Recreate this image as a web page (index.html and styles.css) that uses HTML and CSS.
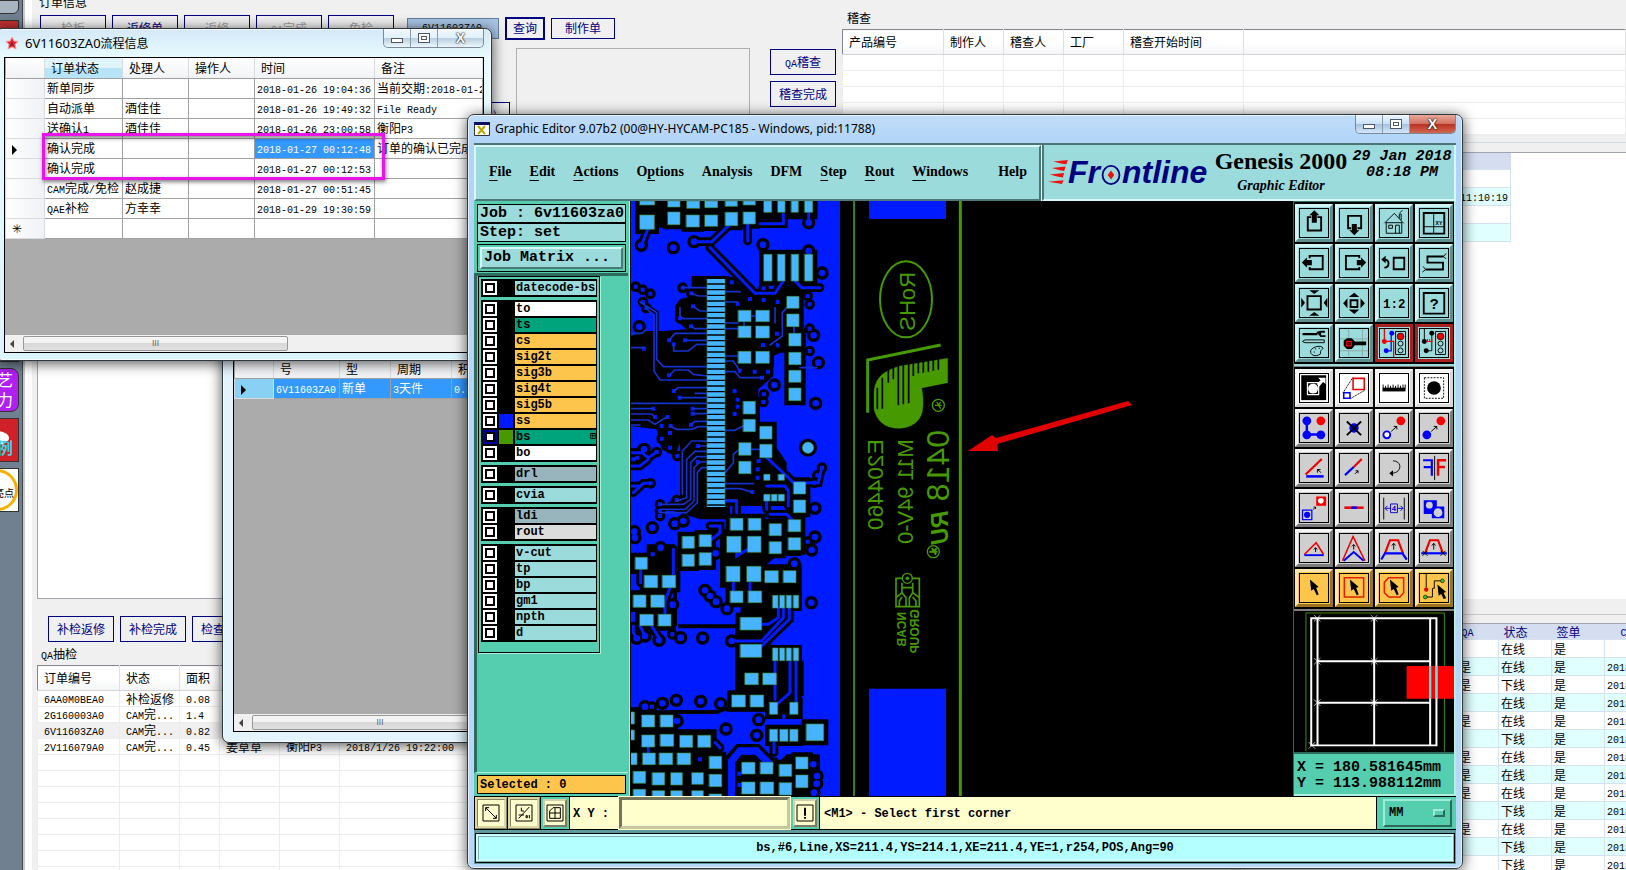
FILE: index.html
```html
<!DOCTYPE html>
<html lang="zh-CN">
<head>
  <meta charset="UTF-8" />
  <meta name="viewport" content="width=device-width, initial-scale=1.0" />
  <title>Graphic Editor 9.07b2</title>
  <link rel="stylesheet" href="styles.css">
</head>
<body>
  <!-- order management app, behind everything -->
  <div class="app">
    <nav class="sidebar">
      <a href="#" class="side-icon side-top"></a>
      <a href="#" class="side-icon side-second"></a>
      <a href="#" class="side-icon side-purple">艺<br>力</a>
      <a href="#" class="side-icon side-red"><span class="blob"></span>例</a>
      <a href="#" class="side-icon side-yellow"><span class="ring">亮点</span></a>
    </nav>
    <main class="app-main">
      <section class="top">
        <div class="orders">
          <div class="group-title">订单信息</div>
          <div class="order-bar">
            <button class="btn off">检板</button>
            <button class="btn">返修单</button>
            <button class="btn off">返修</button>
            <button class="btn off"><span class="l">QA</span>完成</button>
            <button class="btn off">免检</button>
            <input class="order-no" type="text" value="6V11603ZA0" aria-label="订单编号">
            <button class="btn btn-query">查询</button>
            <button class="btn btn-make">制作单</button>
          </div>
          <div class="order-body">
            <button class="btn btn-small">)</button>
            <div class="order-box"></div>
          </div>
        </div>
        <div class="audit-buttons">
          <button class="btn"><span class="l">QA</span>稽查</button>
          <button class="btn">稽查完成</button>
        </div>
        <div class="audit">
          <div class="group-title">稽查</div>
          <table class="list audit-list">
            <colgroup><col class="w101"><col class="w60"><col class="w60"><col class="w60"><col class="w120"><col></colgroup>
            <thead><tr><th>产品编号</th><th>制作人</th><th>稽查人</th><th>工厂</th><th>稽查开始时间</th><th></th></tr></thead>
            <tbody>
              <tr><td></td><td></td><td></td><td></td><td></td><td></td></tr>
              <tr><td></td><td></td><td></td><td></td><td></td><td></td></tr>
              <tr><td></td><td></td><td></td><td></td><td></td><td></td></tr>
              <tr><td></td><td></td><td></td><td></td><td></td><td></td></tr>
              <tr><td></td><td></td><td></td><td></td><td></td><td></td></tr>
            </tbody>
          </table>
        </div>
      </section>

      <section class="middle">
        <div class="white-list"></div>
        <div class="times">
          <table class="grid times-grid">
            <thead><tr><th></th></tr></thead>
            <tbody>
              <tr><td></td></tr>
              <tr><td><span class="l">2018/1/29 11:10:19</span></td></tr>
              <tr><td></td></tr>
              <tr><td></td></tr>
            </tbody>
          </table>
        </div>
      </section>

      <section class="bottom">
        <div class="bottom-left">
          <div class="check-bar">
            <button class="btn">补检返修</button>
            <button class="btn">补检完成</button>
            <button class="btn">检查完成</button>
          </div>
          <div class="group-title qa-title"><span class="l">QA</span>抽检</div>
          <table class="list qa-list">
            <colgroup><col class="w82"><col class="w60"><col class="w40"><col class="w60"><col class="w60"><col></colgroup>
            <thead><tr><th>订单编号</th><th>状态</th><th>面积</th><th>处理人</th><th>工厂</th><th>时间</th></tr></thead>
            <tbody>
              <tr><td><span class="l">6AA0M0BEA0</span></td><td>补检返修</td><td><span class="l">0.08</span></td><td></td><td></td><td></td></tr>
              <tr><td><span class="l">2G160003A0</span></td><td><span class="l">CAM</span>完<span class="l">...</span></td><td><span class="l">1.4</span></td><td></td><td></td><td></td></tr>
              <tr class="sel"><td><span class="l">6V11603ZA0</span></td><td><span class="l">CAM</span>完<span class="l">...</span></td><td><span class="l">0.82</span></td><td></td><td></td><td></td></tr>
              <tr><td><span class="l">2V116079A0</span></td><td><span class="l">CAM</span>完<span class="l">...</span></td><td><span class="l">0.45</span></td><td>姜草草</td><td>衡阳<span class="l">P3</span></td><td><span class="l">2018/1/26 19:22:00</span></td></tr>
              <tr><td></td><td></td><td></td><td></td><td></td><td></td></tr>
              <tr><td></td><td></td><td></td><td></td><td></td><td></td></tr>
              <tr><td></td><td></td><td></td><td></td><td></td><td></td></tr>
              <tr><td></td><td></td><td></td><td></td><td></td><td></td></tr>
              <tr><td></td><td></td><td></td><td></td><td></td><td></td></tr>
              <tr><td></td><td></td><td></td><td></td><td></td><td></td></tr>
              <tr><td></td><td></td><td></td><td></td><td></td><td></td></tr>
              <tr><td></td><td></td><td></td><td></td><td></td><td></td></tr>
            </tbody>
          </table>
        </div>
        <div class="bottom-right">
          <table class="grid status-grid">
            <colgroup><col class="w216"><col class="w42"><col class="w53"><col class="w53"><col class="w120"></colgroup>
            <thead><tr><th></th><th><span class="l">QA</span></th><th>状态</th><th>签单</th><th class="far"><span class="l">CAM</span></th></tr></thead>
            <tbody>
              <tr><td></td><td></td><td>在线</td><td>是</td><td></td></tr>
              <tr><td></td><td>是</td><td>在线</td><td>是</td><td><span class="l">2018/1/29</span></td></tr>
              <tr><td></td><td>是</td><td>下线</td><td>是</td><td><span class="l">2018/1/29</span></td></tr>
              <tr><td></td><td></td><td>在线</td><td>是</td><td><span class="l">2018/1/29</span></td></tr>
              <tr><td></td><td>是</td><td>在线</td><td>是</td><td><span class="l">2018/1/29</span></td></tr>
              <tr><td></td><td></td><td>下线</td><td>是</td><td><span class="l">2018/1/29</span></td></tr>
              <tr><td></td><td>是</td><td>在线</td><td>是</td><td><span class="l">2018/1/29</span></td></tr>
              <tr><td></td><td>是</td><td>在线</td><td>是</td><td><span class="l">2018/1/29</span></td></tr>
              <tr><td></td><td>是</td><td>在线</td><td>是</td><td><span class="l">2018/1/29</span></td></tr>
              <tr><td></td><td></td><td>下线</td><td>是</td><td><span class="l">2018/1/29</span></td></tr>
              <tr><td></td><td>是</td><td>在线</td><td>是</td><td><span class="l">2018/1/29</span></td></tr>
              <tr><td></td><td></td><td>下线</td><td>是</td><td><span class="l">2018/1/29</span></td></tr>
              <tr><td></td><td></td><td>下线</td><td>是</td><td><span class="l">2018/1/29</span></td></tr>
            </tbody>
          </table>
        </div>
      </section>
    </main>
  </div>

  <!-- order query window -->
  <div class="window query-win">
    <div class="query-body">
      <table class="dgv query-table">
        <colgroup><col class="w39"><col class="w66"><col class="w51"><col class="w61"><col></colgroup>
        <thead><tr><th></th><th>生产编<br>号</th><th>类<br>型</th><th>交货<br>周期</th><th>面<br>积</th></tr></thead>
        <tbody><tr><td class="row-head"><span class="tri"></span></td><td><span class="l">6V11603ZA0</span></td><td>新单</td><td><span class="l">3</span>天件</td><td><span class="l">0.82</span></td></tr></tbody>
      </table>
      <div class="scroll"><span class="arrow-left"></span><span class="thumb">III</span></div>
    </div>
  </div>

  <!-- flow info window -->
  <div class="window flow-win">
    <div class="titlebar">
      <svg class="star" viewBox="0 0 14 14"><path fill="#e02838" stroke="#f8a0a0" d="M7 1l2 4 4 .4-3 3 1 4.600L7 11l-4 2 1-4.600-3-3L5 5z"/><path stroke="#801020" d="M5 9h4M7 6v3"/></svg>
      <span class="title"><b>6V11603ZA0</b>流程信息</span>
      <div class="caption">
        <button class="cap" aria-label="min"><i class="min"></i></button>
        <button class="cap" aria-label="max"><i class="max"></i></button>
        <button class="cap cap-close" aria-label="close">X</button>
      </div>
    </div>
    <div class="flow-body">
      <table class="dgv flow-table">
        <colgroup><col class="w39"><col class="w78"><col class="w66"><col class="w66"><col class="w120"><col></colgroup>
        <thead><tr><th></th><th class="hot">订单状态</th><th>处理人</th><th>操作人</th><th>时间</th><th>备注</th></tr></thead>
        <tbody>
          <tr><td class="row-head"></td><td>新单同步</td><td></td><td></td><td><span class="l">2018-01-26 19:04:36</span></td><td>当前交期<span class="l">:2018-01-29</span></td></tr>
          <tr><td class="row-head"></td><td>自动派单</td><td>酒佳佳</td><td></td><td><span class="l">2018-01-26 19:49:32</span></td><td><span class="l">File Ready</span></td></tr>
          <tr><td class="row-head"></td><td>送确认<span class="l">1</span></td><td>酒佳佳</td><td></td><td><span class="l">2018-01-26 23:00:58</span></td><td>衡阳<span class="l">P3</span></td></tr>
          <tr><td class="row-head"><span class="tri"></span></td><td>确认完成</td><td></td><td></td><td class="picked"><span class="l">2018-01-27 00:12:48</span></td><td>订单的确认已完成</td></tr>
          <tr><td class="row-head"></td><td>确认完成</td><td></td><td></td><td><span class="l">2018-01-27 00:12:53</span></td><td></td></tr>
          <tr><td class="row-head"></td><td><span class="l">CAM</span>完成<span class="l">/</span>免检</td><td>赵成捷</td><td></td><td><span class="l">2018-01-27 00:51:45</span></td><td></td></tr>
          <tr><td class="row-head"></td><td><span class="l">QAE</span>补检</td><td>方幸幸</td><td></td><td><span class="l">2018-01-29 19:30:59</span></td><td></td></tr>
          <tr><td class="row-head">✳</td><td></td><td></td><td></td><td></td><td></td></tr>
        </tbody>
      </table>
      <div class="scroll"><span class="arrow-left"></span><span class="thumb thumb-flow">III</span></div>
      <div class="highlight"></div>
    </div>
  </div>

  <!-- Genesis editor -->
  <div class="window editor">
    <div class="titlebar">
      <svg class="xicon" viewBox="0 0 16 14"><path fill="#fff" stroke="#333" d="M.5.5h15v13H.5z"/><path fill="#101060" d="M0 0h16v3H0z"/><path stroke="#b8a800" stroke-width="2" d="M4 4l7 8M11 4l-7 8"/></svg>
      <span class="title">Graphic Editor 9.07b2 (00@HY-HYCAM-PC185 - Windows, pid:11788)</span>
      <div class="caption">
        <button class="cap" aria-label="min"><i class="min"></i></button>
        <button class="cap" aria-label="max"><i class="max"></i></button>
        <button class="cap cap-close cap-red" aria-label="close">X</button>
      </div>
    </div>

    <header class="head">
      <nav class="menu">
        <a href="#"><u>F</u>ile</a><a href="#"><u>E</u>dit</a><a href="#"><u>A</u>ctions</a><a href="#">O<u>p</u>tions</a><a href="#">Analysis</a><a href="#">DFM</a><a href="#"><u>S</u>tep</a><a href="#"><u>R</u>out</a><a href="#"><u>W</u>indows</a><a href="#" class="help">Help</a>
      </nav>
      <div class="brand">
        <div class="logo">
          <svg class="flames" viewBox="0 0 54 66"><path fill="#f01010" d="M14 4l40-4-4 12-12-2zM10 22l38-4-4 12-12-2zM4 40l40-4-4 12-12-2zM0 60l42-4-4 10-12-2z"/></svg><span>Fr</span><svg class="o" viewBox="0 0 56 60"><ellipse cx="28" cy="30" rx="23" ry="25" fill="#9cdbdb" stroke="#000080" stroke-width="5"/><path fill="#f01010" d="M28 18l9 12-9 12-9-12z"/></svg><span>ntline</span>
        </div>
        <div class="product"><strong>Genesis 2000</strong><em>Graphic Editor</em></div>
        <div class="clock">29 Jan 2018<br>08:18 PM</div>
      </div>
    </header>

    <div class="work">
      <aside class="layers">
        <div class="field">Job : 6v11603za0</div>
        <div class="field">Step: set</div>
        <div class="matrix-wrap"><button class="matrix">Job Matrix ...</button></div>
        <div class="layer-area">
          <div class="layer-frame">
            <div class="layer-group">
              <label class="layer aqua"><input type="checkbox"><i></i><span>datecode-bs</span></label>
            </div>
            <div class="layer-group">
              <label class="layer white"><input type="checkbox"><i></i><span>to</span></label>
              <label class="layer green"><input type="checkbox"><i></i><span>ts</span></label>
              <label class="layer gold"><input type="checkbox"><i></i><span>cs</span></label>
              <label class="layer gold"><input type="checkbox"><i></i><span>sig2t</span></label>
              <label class="layer gold"><input type="checkbox"><i></i><span>sig3b</span></label>
              <label class="layer gold"><input type="checkbox"><i></i><span>sig4t</span></label>
              <label class="layer gold"><input type="checkbox"><i></i><span>sig5b</span></label>
              <label class="layer gold"><input type="checkbox"><i class="c-blue"></i><span>ss</span></label>
              <label class="layer green work-layer"><input type="checkbox"><i class="c-green"></i><span>bs<small>⊞</small></span></label>
              <label class="layer white"><input type="checkbox"><i></i><span>bo</span></label>
            </div>
            <div class="layer-group">
              <label class="layer slate"><input type="checkbox"><i></i><span>drl</span></label>
            </div>
            <div class="layer-group">
              <label class="layer aqua"><input type="checkbox"><i></i><span>cvia</span></label>
            </div>
            <div class="layer-group">
              <label class="layer slate"><input type="checkbox"><i></i><span>ldi</span></label>
              <label class="layer grey"><input type="checkbox"><i></i><span>rout</span></label>
            </div>
            <div class="layer-group">
              <label class="layer aqua"><input type="checkbox"><i></i><span>v-cut</span></label>
              <label class="layer aqua"><input type="checkbox"><i></i><span>tp</span></label>
              <label class="layer aqua"><input type="checkbox"><i></i><span>bp</span></label>
              <label class="layer aqua"><input type="checkbox"><i></i><span>gm1</span></label>
              <label class="layer aqua"><input type="checkbox"><i></i><span>npth</span></label>
              <label class="layer aqua"><input type="checkbox"><i></i><span>d</span></label>
            </div>
          </div>
        </div>
        <div class="field selected">Selected : 0</div>
      </aside>

      <div class="canvas">
        <!-- board drawing, three units per screen pixel -->
        <svg class="pcb" viewBox="33 15 1986 1791" preserveAspectRatio="xMinYMin slice">
          <defs>
            <path id="pads" d="M60 15h44v12h-44zM144 15h36v18h-36zM201 15h38v22h-38zM255 15h38v20h-38zM316 15h36v16h-36zM370 15h36v12h-36zM432 15h23v34h-23zM474 15h21v34h-21zM514 15h21v34h-21zM554 15h24v34h-24z
            M60 57h43v43h-43zM144 48h36v38h-36zM199 57h39v36h-39zM255 57h38v34h-38zM316 49h37v40h-37zM370 48h36v36h-36zM432 175h24v80h-24zM473 175h22v80h-22zM514 175h22v80h-22zM554 175h24v80h-24z
            M501 301h36v36h-36zM501 354h36v38h-36zM507 412h36v38h-36zM507 469h36v37h-36zM507 523h36v36h-36zM507 576h36v38h-36z
            M355 343h38v34h-38zM408 343h40v34h-40zM355 390h38v35h-38zM408 390h40v36h-40zM355 466h38v36h-38zM408 466h40v36h-40z
            M370 616h36v38h-36zM370 670h36v37h-36zM420 691h36v38h-36zM420 745h36v40h-36zM357 740h36v38h-36zM357 796h36v37h-36zM521 858h36v36h-36zM521 912h36v38h-36z
            M331 967h38v36h-38zM385 967h38v36h-38zM321 1021h42v48h-42zM383 1021h40v48h-40zM448 983h36v36h-36zM505 971h37v36h-37zM448 1037h36v36h-36zM505 1025h37v37h-37z
            M187 1021h36v36h-36zM238 1016h36v36h-36zM187 1075h36v36h-36zM238 1070h36v38h-36zM46 1084h36v36h-36zM73 1138h40v37h-40zM127 1138h40v37h-40zM40 1197h38v37h-38zM93 1197h40v37h-40zM60 1255h40v34h-40zM115 1255h38v35h-38z
            M319 1111h41v46h-41zM381 1111h42v46h-42zM435 1124h40v36h-40zM490 1124h38v36h-38zM331 1185h38v35h-38zM385 1185h40v35h-40zM361 1264h64v38h-64zM361 1345h64v39h-64zM375 1431h40v35h-40zM429 1431h40v35h-40zM336 1497h40v36h-40zM391 1497h40v36h-40z
            M449 1519h24v36h-24zM510 1519h24v36h-24zM449 1600h24v36h-24zM480 1600h24v36h-24zM510 1600h24v36h-24zM559 1584h52v50h-52z
            M66 1557h38v36h-38zM121 1557h38v36h-38zM66 1617h38v36h-38zM121 1615h40v36h-40zM180 1618h38v36h-38zM234 1618h38v36h-38zM33 1671h18v35h-18zM68 1671h38v35h-38zM118 1671h40v35h-40zM172 1671h40v35h-40zM268 1681h37v37h-37z
            M40 1726h37v36h-37zM97 1730h37v37h-37zM153 1730h34v37h-34zM216 1730h34v35h-34zM268 1735h37v37h-37zM40 1780h37v26h-37zM97 1784h37v22h-37zM153 1784h34v22h-34zM216 1784h34v22h-34zM268 1794h37v12h-37z
            M366 1699h39v35h-39zM421 1699h38v35h-38zM478 1705h37v36h-37zM528 1683h36v36h-36zM366 1758h39v36h-39zM421 1758h40v36h-40zM478 1760h37v37h-37zM528 1737h36v38h-36zM33 1548h10v36h-10zM33 1602h10v30h-10z"/>
            <path id="fine" d="M432 835h18v18h-18zM475 835h18v18h-18zM432 895h18v20h-18zM454 895h17v20h-17zM475 895h18v20h-18zM458 1198h16v38h-16zM479 1198h15v38h-15zM499 1198h15v38h-15zM520 1198h16v38h-16zM458 1356h16v38h-16zM479 1356h15v38h-15zM499 1356h15v38h-15zM520 1356h16v38h-16z"/>
            <path id="vias" d="M64 148h0M160 155h0M222 137h0M429 146h0M566 80h0M606 231h0M566 165h0M587 622h0M463 567h0M72 760h0M58 392h0M595 500h0M581 418h0M97 995h0M164 983h0M190 975h0M43 1007h0M45 1025h0M122 1055h0M287 1072h0M585 1023h0M575 1062h0M585 937h0M523 1103h0M574 1220h0M158 1226h0M255 1183h0M270 1200h0M288 1217h0M321 1238h0M182 1325h0M248 1326h0M117 1333h0M75 1320h0M50 1327h0M335 1335h0M169 1513h0M242 1516h0M302 1523h0M75 1532h0M127 1522h0M318 1599h0M416 1571h0M410 1618h0M171 1575h0M591 1740h0M590 1763h0M582 1790h0M580 1705h0"/>
            <path id="dots" d="M47 272h0M68 281h0M91 293h0M69 318h0M79 336h0M188 275h0M214 292h0M219 331h0M180 367h0M213 391h0M147 433h0M161 445h0M195 433h0M335 259h0M431 277h0M390 309h0M431 312h0M473 318h0M353 324h0M563 300h0M569 325h0M569 398h0M569 465h0M471 413h0M473 448h0M429 447h0M426 545h0M444 527h0M404 527h0M359 524h0M147 538h0M162 585h0M179 605h0M100 638h0M105 663h0M143 663h0M218 638h0M218 653h0M213 686h0M125 690h0M152 690h0M150 711h0M125 728h0M150 755h0M172 780h0M344 585h0M353 611h0M353 632h0M344 654h0M432 595h0M430 618h0M234 750h0M234 798h0M416 795h0M413 820h0M413 845h0M397 888h0M606 815h0M592 838h0M583 860h0M72 458h0M40 790h0M110 768h0M52 785h0M92 862h0M170 912h0M120 925h0M98 1075h0M563 1037h0M96 1532h0M157 1315h0M120 945h0M120 960h0M240 1690h0M358 1733h0M358 1767h0"/>
            <path id="wide" d="M222 137H275L330 85M270 155L405 292H465L490 255M420 83H490V55M566 50V80M525 255L545 275H600M383 80V135M85 95L64 148M33 770H65L85 785 110 768M33 810H60L85 790M40 890L70 862H90M33 870H55M440 785L500 840 520 860H595L605 815M440 870H495L505 885V930M350 950V915H320M440 940V900M450 955H500L520 975M270 990H300V1010L275 1030M62 1120V1160M150 1175L135 1215V1255M95 1290L120 1330M60 1290L75 1320M40 1290V1310L50 1327M160 1060V1140M350 1060V1080L400 1050M340 1160V1185M390 1160V1185M490 1235V1265L425 1335H335M475 1235V1265L445 1285H425M508 1235V1270L425 1350M465 1395V1510M510 1395V1490L465 1530M528 1395V1520M85 1655V1680M300 1655L285 1640M462 1640V1670"/>
          </defs>
          <path fill="#001bff" d="M33 15h627v1791H33z"/>
          <path d="M48 15H592V70H405L400 95H110L48 60zM425 165H590V265H425z
          M215 240H325L400 295H470V270H530L545 300V620H497V470H480L460 480V540L415 580V600L410 640H420V690H460V740L500 800V835L520 850V930H180V740L165 780 125 760 110 700 33 690V420L75 405H130L200 400 165 370V330L180 310 215 300z
          M100 945L180 900H330V970H240L160 945zM80 1045H165V1140H80zM300 1000H545V1080H470L440 1105H545V1175H300zM375 1160H545V1245H510L450 1350H545V1555H440V1540H345V1295H360V1255z
          M60 1545H165V1600H290V1635L310 1675V1806H33V1600H60zM345 1675H440L460 1715 500 1675H600V1806H345z"/>
          <path class="cut" d="M65 320L110 350V520L125 545M175 1291H350M150 1548H290L310 1540H440M322 1806V1685L352 1650H415L465 1700M165 1140V1290M545 1395V1500"/>
          <g class="halo">
            <use href="#pads" stroke-width="28"/><use href="#fine" stroke-width="18"/>
            <use href="#vias" stroke-width="40"/><use href="#dots" stroke-width="32"/><use href="#wide" stroke-width="26"/>
          </g>
          <g class="copper">
            <use href="#vias" stroke-width="20"/><use href="#wide" stroke-width="9"/><use href="#dots" class="sq" stroke-width="12"/>
            <path stroke-width="22" d="M335 1806V1695L360 1665H410L450 1705"/>
            <path class="thin" d="M188 275H261M214 292L235 300H261M219 331L240 345H261M180 335V360L190 368H261M213 391L225 398H261M147 433L165 412H261M195 433H261M161 445V465H205L230 445H261M60 318L110 350V490L130 512H261M79 336L102 360V525L120 552H261M147 538L165 522H205L220 535 261 540M33 622H261M162 585L175 575H261M179 605H261M225 592H261M33 638H100M33 654H95L105 663M33 672H85L105 685 125 672 143 663M33 687H60M218 638H261M218 653H261M213 686L225 676H261M150 690L170 700H215L235 692H261M33 455H72M33 412H65L80 400M261 735H215L187 765V895M261 750H234M261 766H225L200 790V905L170 915M261 782H230L212 800V910L190 925H120M261 798H240L222 815V915L195 940H120M261 815H245L232 830V920L200 950H120M315 287H360M315 318H353M315 381H355M315 398H355M315 480H355M315 495H340L359 524M315 527H345L360 545H426M450 447L487 420V350L500 335M315 703H344L370 690M315 830L340 800V775L357 760M315 863H400M315 878H360L397 888M393 760H420M393 360H408M372 377V390M465 335V380M522 392V412M540 515H590M315 912H350"/>
          </g>
          <use class="pad" href="#pads"/><use class="pad" href="#fine"/>
          <path stroke="#46b4ff" stroke-width="54" stroke-dasharray="13 4" d="M288 249V933"/>
          <path stroke="#3c8c3c" stroke-width="2" fill="none" d="M261 249V933M315 249V933"/>
          <circle cx="564" cy="755" r="27"/><circle class="pad" cx="564" cy="755" r="17"/>
          <g class="mask">
            <path fill="#001bff" stroke="none" d="M747 15h231v54H747zM747 1478h231v328H747z"/>
            <path stroke-width="5" d="M702 15V1806"/><path stroke-width="9" d="M1021 15V1806"/>
            <ellipse cx="858" cy="310" rx="78" ry="114" stroke-width="6"/>
            <path stroke-width="9" d="M743 650V492L962 447"/>
            <path class="solid" d="M762 640V590C765 545 790 525 840 510L983 487V560L905 576C910 600 910 620 908 640 903 680 870 697 835 697 790 697 770 670 762 640z"/>
            <path stroke="#000" stroke-width="5" d="M772 575V640M787 545V638M805 510V560M820 510V550M835 505V628M850 505V625M866 500V622M880 500V540M895 495V532M910 495V530M925 490V527M940 490V524M955 488V521"/>
            <circle cx="955" cy="628" r="18" stroke-width="4"/><path stroke-width="4" d="M945 628h20M950 618l12 20M962 618l-8 10"/>
            <circle cx="940" cy="1067" r="18" stroke-width="4"/><path stroke-width="6" d="M928 1067h24M936 1056l12 20M950 1056l-8 10"/>
            <path stroke-width="5" d="M846 1147H828V1232H898V1147H878M846 1160V1190L828 1205M878 1160V1190L898 1205M846 1190L858 1205V1232M878 1190L868 1205V1232M846 1175H878M846 1203L838 1215V1232M878 1203L888 1215V1232"/>
            <circle cx="862" cy="1147" r="15" stroke-width="4" fill="#000"/><circle class="solid" cx="862" cy="1147" r="5"/>
            <!-- solder side, so the legend reads mirrored and down the board -->
            <text class="rohs" transform="matrix(0 1 1 0 884 228)" font-size="66">RoHS</text>
            <text transform="matrix(0 1 1 0 790 730)" font-size="68">E204460</text>
            <text transform="matrix(0 1 1 0 880 730)" font-size="66">M11 94V-0</text>
            <text transform="matrix(0 1 1 0 986 702)" font-size="96">0418</text>
            <text class="ul" transform="matrix(0 1 1 0 984 944)" font-size="70">RU</text>
            <text class="small" transform="matrix(0 1 1 0 858 1248)" font-size="36">NCAB</text>
            <text class="small" transform="matrix(0 1 1 0 898 1240)" font-size="36">GROUP</text>
          </g>
        </svg>
        <svg class="pointer" viewBox="0 0 166 54"><path fill="#e00000" d="M0 50L24 34 28 37 160 0 164 4 29 43 30 50z"/></svg>
      </div>

      <aside class="tools">
        <div class="tool-grid view-tools">
          <button class="tool"><svg viewBox="0 0 90 90"><path class="k6" d="M36 26H25V69H68V26H56"/><path d="M46 4L62 20H54V44H38V20H30z"/></svg></button>
          <button class="tool"><svg viewBox="0 0 90 90"><path class="k6" d="M36 62H26V22H68V62H56"/><path d="M46 84L62 68H54V48H38V68H30z"/></svg></button>
          <button class="tool"><svg viewBox="0 0 90 90"><path class="k3" d="M14 46L46 14 76 46M20 42V78H70V42M20 44H70M50 78V52H62V78M28 52H40V62H28zM62 30V16H68V36M64 12L72 4"/></svg></button>
          <button class="tool"><svg viewBox="0 0 90 90"><path class="k6" d="M12 13H78V79H12z"/><path class="k3" d="M44 13V79M12 57H78"/><text x="50" y="52" font-size="18">XY</text></svg></button>
          <button class="tool"><svg viewBox="0 0 90 90"><path class="k6" d="M31 30V22H73V65H31V58"/><path d="M6 43L22 27V35H38V52H22V60z"/></svg></button>
          <button class="tool"><svg viewBox="0 0 90 90"><path class="k6" d="M62 30V22H19V65H62V58"/><path d="M84 43L68 27V35H54V52H68V60z"/></svg></button>
          <button class="tool"><svg viewBox="0 0 90 90"><path class="k6" d="M44 28H78V65H44zM14 34C32 34 32 60 14 60"/><path d="M4 34L18 22V46z"/></svg></button>
          <button class="tool"><svg viewBox="0 0 90 90"><path class="k6" d="M76 24H24V44H74V66H18"/><path class="k3" d="M84 14L76 24 84 32M10 56L18 66 8 74"/></svg></button>
          <button class="tool"><svg viewBox="0 0 90 90"><path class="k6" d="M24 23H67V66H24z"/><path d="M30 4H62L46 16zM30 86H62L46 74zM4 28V60L16 44zM88 28V60L76 44z"/></svg></button>
          <button class="tool"><svg viewBox="0 0 90 90"><path class="k6" d="M34 36H56V58H34z"/><path d="M28 26H62L46 12zM28 66H62L46 80zM24 30V62L10 46zM66 30V62L80 46z"/></svg></button>
          <button class="tool"><svg viewBox="0 0 90 90"><text x="10" y="60" font-size="40">1:2</text></svg></button>
          <button class="tool"><svg viewBox="0 0 90 90"><path class="k6" d="M12 13H78V79H12z"/><text x="31" y="64" font-size="48">?</text></svg></button>
          <button class="tool"><svg viewBox="0 0 90 90"><path d="M8 13H56V20H8zM52 10L66 6H80V12H68V20H82V26H66z"/><path class="k3" d="M8 40L16 35H78V44H16zM34 70C40 56 70 50 74 62 70 68 64 68 66 80 50 92 32 84 34 70zM48 64h4M60 62h4M44 74h4"/></svg></button>
          <button class="tool"><svg viewBox="0 0 90 90"><path stroke="#8aa8a8" stroke-width="3" d="M28 0V88M72 0V88M0 32H90M0 70H90"/><path d="M12 38L22 30H38L48 40H84V52H48L38 64H22L12 54z"/><path fill="none" stroke="#f00" stroke-width="4" d="M22 40H36V54H22zM29 44V50"/></svg></button>
          <button class="tool alert"><svg viewBox="0 0 90 90"><path fill="none" stroke="#00f" stroke-width="4" d="M36 14V40H30M18 70H36V42"/><path fill="none" stroke="#e00" stroke-width="4" d="M14 0V40H44V90"/><circle cx="38" cy="14" r="8" fill="#00f"/><circle cx="20" cy="70" r="8" fill="#00f"/><circle cx="14" cy="40" r="8" fill="#e00"/><path class="k3" d="M50 8H82V82H50z"/><circle cx="66" cy="24" r="11" fill="#e00" stroke="#000" stroke-width="2"/><circle class="k3" cx="66" cy="47" r="8"/><circle class="k3" cx="66" cy="69" r="8"/></svg></button>
          <button class="tool alert"><svg viewBox="0 0 90 90"><path class="k3" d="M38 14V70H20M14 0V40"/><circle cx="38" cy="14" r="8"/><circle cx="20" cy="70" r="8"/><circle cx="14" cy="40" r="8"/><path fill="none" stroke="#e00" stroke-width="3" d="M20 40H40M24 32V40M31 32V40M38 32V40"/><path class="k3" d="M50 8H82V82H50z"/><circle cx="66" cy="24" r="11" fill="#e00" stroke="#000" stroke-width="2"/><circle class="k3" cx="66" cy="47" r="8"/><circle class="k3" cx="66" cy="69" r="8"/></svg></button>
        </div>
        <div class="tool-grid edit-tools">
          <button class="tool lit"><svg viewBox="0 0 90 90"><path d="M4 4H84V84H4z"/><path fill="none" stroke="#fff" stroke-width="4" d="M24 28H60V66H24z"/><circle cx="42" cy="47" r="16" fill="#fff"/><path fill="#fff" d="M54 32L66 20 58 12H82V32L74 26 62 40z"/></svg></button>
          <button class="tool lit"><svg viewBox="0 0 90 90"><path class="k3" stroke-dasharray="4 2" d="M10 60L42 10M32 80L80 52"/><path fill="none" stroke="#e00" stroke-width="5" d="M42 14H78V50H42z"/><path fill="none" stroke="#00f" stroke-width="5" d="M12 60H32V78H12z"/></svg></button>
          <button class="tool lit"><svg viewBox="0 0 90 90"><path d="M8 44H82V56H8z"/><path stroke="#000" stroke-width="3" d="M10 34V46M18 38V46M26 34V46M34 38V46M42 34V46M50 38V46M58 34V46M66 38V46M74 34V46M81 34V46"/></svg></button>
          <button class="tool lit"><svg viewBox="0 0 90 90"><path class="k3" stroke-dasharray="6 4" d="M14 12H76V78H14z"/><circle cx="45" cy="45" r="22"/></svg></button>
          <button class="tool"><svg viewBox="0 0 90 90"><path fill="none" stroke="#00f" stroke-width="8" d="M22 22V66H66"/><g fill="#00f"><circle cx="22" cy="22" r="14"/><circle cx="22" cy="67" r="14"/><circle cx="67" cy="67" r="14"/></g><circle cx="67" cy="22" r="14" fill="#f00"/></svg></button>
          <button class="tool"><svg viewBox="0 0 90 90"><circle cx="45" cy="45" r="15" fill="#00f"/><path class="k6" d="M22 24L68 68M68 24L22 68"/></svg></button>
          <button class="tool"><svg viewBox="0 0 90 90"><circle cx="67" cy="22" r="14" fill="#f00"/><circle cx="22" cy="67" r="11" fill="#fff" stroke="#00f" stroke-width="6"/><path class="k3" d="M36 56L54 40M44 40H54V50"/></svg></button>
          <button class="tool"><svg viewBox="0 0 90 90"><circle cx="67" cy="22" r="14" fill="#f00"/><circle cx="22" cy="67" r="14" fill="#00f"/><path class="k3" d="M36 56L54 40M44 40H54V50"/></svg></button>
          <button class="tool"><svg viewBox="0 0 90 90"><path stroke="#e00" stroke-width="7" d="M18 66L70 16"/><path stroke="#00f" stroke-width="8" d="M20 72H76"/><path class="k3" d="M68 60L56 50M56 60V50H66"/></svg></button>
          <button class="tool"><svg viewBox="0 0 90 90"><path stroke="#e00" stroke-width="7" d="M44 42L70 16"/><path stroke="#00f" stroke-width="7" d="M16 68L44 42"/><path class="k3" d="M48 64L58 54M50 54H58V62"/></svg></button>
          <button class="tool"><svg viewBox="0 0 90 90"><path class="k3" d="M42 22C72 22 72 62 36 62"/><path d="M30 62L42 52V72z"/></svg></button>
          <button class="tool"><svg viewBox="0 0 90 90"><path stroke="#000" stroke-width="3" d="M47 6V84"/><path fill="none" stroke="#00f" stroke-width="7" d="M10 20H38V70M12 42H38"/><path fill="none" stroke="#e00" stroke-width="8" d="M84 20H58V70M80 42H58"/></svg></button>
          <button class="tool"><svg viewBox="0 0 90 90"><path fill="#f00" d="M52 8H84V38H52z"/><circle cx="67" cy="22" r="9" fill="#fff"/><path fill="none" stroke="#00f" stroke-width="4" d="M8 52H38V82H8z"/><circle cx="23" cy="67" r="10" fill="#00f"/><path class="k3" d="M42 50L50 42M44 42H50V48"/></svg></button>
          <button class="tool"><svg viewBox="0 0 90 90"><path stroke="#e00" stroke-width="8" d="M14 44H76"/><path stroke="#00f" stroke-width="8" d="M36 44H54"/></svg></button>
          <button class="tool"><svg viewBox="0 0 90 90"><path class="k3" d="M12 12V82M78 12V82"/><path fill="none" stroke="#0000d0" stroke-width="3" d="M16 46H34M56 46H74M24 38L16 46 24 54M66 38L74 46 66 54M34 32H56V60H34z"/><text x="38" y="55" font-size="24" fill="#0000d0">4</text></svg></button>
          <button class="tool"><svg viewBox="0 0 90 90"><path fill="#00f" d="M12 20H54V40H78V78H38V64H12z"/><circle cx="30" cy="36" r="11" fill="#cfcfcf"/><circle cx="58" cy="60" r="14" fill="#cfcfcf"/></svg></button>
          <button class="tool"><svg viewBox="0 0 90 90"><path fill="none" stroke="#e00" stroke-width="5" d="M14 66L52 28 76 66"/><path stroke="#00f" stroke-width="6" d="M14 68H76"/><path class="k3" d="M50 58V44M44 50L50 44 56 50"/></svg></button>
          <button class="tool"><svg viewBox="0 0 90 90"><path fill="none" stroke="#e00" stroke-width="5" d="M8 86L42 8 80 86"/><path fill="none" stroke="#00f" stroke-width="6" d="M12 86L44 58 76 86"/><path class="k3" d="M44 50V34M38 40L44 34 50 40"/></svg></button>
          <button class="tool"><svg viewBox="0 0 90 90"><path fill="none" stroke="#e00" stroke-width="7" d="M16 62L32 20H58L74 62"/><path fill="none" stroke="#00f" stroke-width="7" d="M4 82L16 62H72L86 82"/><path class="k3" d="M44 50V30M38 37L44 30 50 37"/></svg></button>
          <button class="tool"><svg viewBox="0 0 90 90"><path fill="none" stroke="#e00" stroke-width="7" d="M16 62L32 20H58L74 62"/><path stroke="#00f" stroke-width="7" d="M4 62H86"/><path class="k3" d="M44 50V30M38 37L44 30 50 37M8 54L24 70M24 54L8 70M66 54L82 70M82 54L66 70"/></svg></button>
          <button class="tool amber"><svg viewBox="0 0 90 90"><path d="M32 18L60 42 52 44 60 66 54 68 44 48 36 54z"/></svg></button>
          <button class="tool amber"><svg viewBox="0 0 90 90"><path fill="none" stroke="#e02000" stroke-width="5" d="M14 12H76V74H14z"/><path d="M32 18L60 42 52 44 60 66 54 68 44 48 36 54z"/></svg></button>
          <button class="tool amber"><svg viewBox="0 0 90 90"><path fill="none" stroke="#e02000" stroke-width="5" d="M28 12H76V60L64 74H28L14 60V26z"/><path d="M32 18L60 42 52 44 60 66 54 68 44 48 36 54z"/></svg></button>
          <button class="tool amber"><svg viewBox="0 0 90 90"><path class="k3" d="M20 0V44M18 74H40V46H46V22H72"/><circle cx="20" cy="50" r="7" fill="#d00"/><g fill="#3c3" stroke="#000" stroke-width="2"><circle cx="17" cy="74" r="6"/><circle cx="72" cy="22" r="6"/></g><path d="M56 34L84 58 76 60 84 78 76 80 68 64 60 70z"/></svg></button>
        </div>
        <svg class="minimap" viewBox="0 0 483 426" preserveAspectRatio="none">
          <path fill="none" stroke="#3c8c10" stroke-width="3" d="M36 424V6H454V424"/>
          <path fill="#f00" d="M340 166H483V265H340z"/>
          <g fill="none" stroke="#fff" stroke-width="6"><path d="M52 22H430V406H52zM71 22V406M242 22V406M411 22V406M71 152H411M71 277H411"/><path stroke-width="2" d="M60 12l20 20M80 12l-20 20M232 12l20 20M252 12l-20 20M60 142l20 20M80 142l-20 20M232 142l20 20M252 142l-20 20M60 267l20 20M80 267l-20 20M232 267l20 20M252 267l-20 20M44 396l20 20M64 396l-20 20"/></g>
          <path stroke="#50e0e0" stroke-width="6" d="M411 166V265M430 166V265"/>
        </svg>
        <div class="coords">X = 180.581645mm<br>Y = 113.988112mm</div>
      </aside>
    </div>

    <div class="prompt">
      <button class="mini"><svg viewBox="0 0 60 60"><path class="k3" d="M6 6H54V54H6zM14 14L46 46M14 24V14H24M46 36V46H36"/></svg></button>
      <button class="mini"><svg viewBox="0 0 60 60"><path class="k3" d="M6 6H54V54H6zM14 46L46 12M14 36H30M22 14V24H30M36 44h4v-6h-4zM46 36v10"/></svg></button>
      <button class="mini teal"><svg viewBox="0 0 60 60"><path class="k3" d="M6 6H54V54H6zM24 14H46V46H14V24zM30 14V46M14 30H46"/></svg></button>
      <label class="xy" for="xy">X Y :</label>
      <input id="xy" class="xy-input" type="text">
      <button class="mini teal bang"><svg viewBox="0 0 60 60"><path class="k3" d="M6 6H54V54H6z"/><path d="M27 14H33V38H27zM27 42H33V47H27z"/></svg></button>
      <div class="message">&lt;M1&gt; - Select first corner</div>
      <div class="unit-wrap"><button class="unit">MM<i></i></button></div>
    </div>
    <div class="status"><div>bs,#6,Line,XS=211.4,YS=214.1,XE=211.4,YE=1,r254,POS,Ang=90</div></div>
  </div>
</body>
</html>
```

FILE: styles.css
```css
* {
  box-sizing: border-box;
}
body {
  margin: 0;
  height: 100vh;
  overflow: hidden;
  position: relative;
  background: #f0f0f0;
  color: #000;
  font-family: "Noto Sans CJK SC", sans-serif;
  font-size: 12px;
  line-height: 16px;
}
button, input {
  font: inherit;
  margin: 0;
  padding: 0;
}
a {
  color: inherit;
  text-decoration: none;
}
table {
  border-collapse: collapse;
  table-layout: fixed;
  width: 100%;
}
th, td {
  font-weight: 400;
  text-align: left;
  white-space: nowrap;
  overflow: hidden;
}
/* half-width characters are six pixels wide */
.l {
  font-family: "Liberation Mono", monospace;
  font-size: 10px;
  line-height: 10px;
}
.w39 { width: 39px; }
.w40 { width: 40px; }
.w42 { width: 42px; }
.w51 { width: 51px; }
.w53 { width: 53px; }
.w60 { width: 60px; }
.w61 { width: 61px; }
.w66 { width: 66px; }
.w78 { width: 78px; }
.w82 { width: 82px; }
.w101 { width: 101px; }
.w120 { width: 120px; }
.w216 { width: 216px; }

/* order app */
.app {
  display: flex;
  height: 100%;
}
.sidebar {
  width: 25px;
  flex: none;
  background: #708090;
  border-right: 2px solid #c8c8c8;
  box-shadow: inset -1px 0 #404850;
  overflow: hidden;
  display: flex;
  flex-direction: column;
  align-items: flex-end;
  gap: 6px;
  padding-right: 4px;
}
.side-icon {
  width: 44px;
  height: 44px;
  flex: none;
  border: 1px solid #333;
  text-align: right;
}
.side-top {
  height: 14px;
  background: #a8b4c0;
  border-radius: 0 0 6px 0;
}
.side-second {
  height: 342px;
  background: linear-gradient(#c03030 10px, #708090 30px);
}
.side-purple {
  background: #b020f0;
  color: #fff;
  font-size: 16px;
  line-height: 20px;
  border-radius: 0 8px 8px 0;
  padding-right: 5px;
}
.side-red {
  background: #d02028;
  color: #40d0e0;
  font-size: 16px;
  font-weight: 700;
  line-height: 56px;
  padding-right: 5px;
}
.blob {
  float: right;
  width: 26px;
  height: 14px;
  margin: 12px 4px -26px 0;
  background: #fff;
  border-radius: 50%;
}
.side-yellow {
  background: #fff;
}
.ring {
  display: block;
  width: 42px;
  height: 42px;
  border: 3px solid #f8b000;
  border-radius: 50%;
  line-height: 42px;
  font-size: 10px;
  padding-right: 1px;
}
.app-main {
  flex: 1;
  min-width: 0;
  display: flex;
  flex-direction: column;
  border-left: 7px solid #fff;
}
.top {
  height: 143px;
  flex: none;
  display: flex;
  overflow: hidden;
  border-bottom: 1px solid #d0d8e0;
}
.orders {
  width: 726px;
  flex: none;
  overflow: hidden;
}
.orders .group-title {
  line-height: 18px;
  height: 15px;
  margin-top: -7px;
  padding-left: 7px;
}
.order-bar {
  display: flex;
  align-items: center;
  gap: 6px;
  padding: 7px 0 0 8px;
}
.btn {
  width: 66px;
  height: 26px;
  flex: none;
  background: #f0f0f0;
  border: 1px solid #000080;
  color: #000080;
}
.btn.off {
  color: #a0a0a0;
}
.order-no {
  width: 92px;
  height: 21px;
  margin: 0 0 0 7px;
  border: 1px solid #6080a0;
  background: #a8c4e4;
  font: 10px "Liberation Mono", monospace;
  padding-left: 14px;
}
.btn-query {
  width: 40px;
  height: 23px;
  border-width: 2px;
}
.btn-make {
  width: 64px;
  height: 21px;
}
.order-body {
  display: flex;
  gap: 6px;
  padding: 7px 0 0 448px;
}
.btn-small {
  width: 30px;
  margin-top: 54px;
}
.order-box {
  width: 234px;
  height: 120px;
  border: 1px solid #b0b0b0;
}
.audit-buttons {
  width: 82px;
  flex: none;
  display: flex;
  flex-direction: column;
  gap: 6px;
  padding: 49px 0 0 12px;
}
.audit {
  flex: 1;
  min-width: 0;
  padding: 10px 0 11px 2px;
}
.audit .group-title {
  height: 19px;
  padding-left: 5px;
}
.list {
  background: #fff;
  border: 1px solid #828790;
}
.list th {
  height: 25px;
  padding: 0 6px;
  border-right: 1px solid #e0e0e0;
  border-bottom: 1px solid #d5d5d5;
  background: linear-gradient(#fff 50%, #f4f5f7);
}
.list td {
  height: 16px;
  line-height: 12px;
  padding: 0 6px;
  border: 1px solid #ededed;
}
.list .sel td {
  background: #f0f0f0;
}
.middle {
  flex: 1;
  min-height: 0;
  display: flex;
  background: #f0f0f0;
}
.white-list {
  width: 860px;
  margin: 8px 8px 7px 5px;
  flex: none;
  border: 1px solid #a0a4ac;
  background: #fff;
}
.times {
  flex: 1;
  margin-top: 9px;
  margin-bottom: 7px;
  border-top: 1px solid #a0a4ac;
  background: #fff;
}
.times-grid {
  width: 606px;
}
.grid th {
  background: #d4def0;
  color: #000080;
  height: 16px;
  line-height: 14px;
  padding: 0 5px;
}
.grid td {
  height: 18px;
  line-height: 14px;
  padding: 0 2px;
  border: 1px solid #d5e2f0;
  background: #fff;
}
.grid tr:nth-child(even) td {
  background: #e0ffff;
}
.times-grid td {
  text-align: right;
}
.grid th.far {
  padding-left: 16px;
}
.bottom {
  height: 264px;
  flex: none;
  display: flex;
  overflow: hidden;
}
.bottom-left {
  width: 1200px;
  flex: none;
  padding: 10px 0 0 5px;
}
.check-bar {
  display: flex;
  gap: 6px;
  padding-left: 11px;
}
.qa-title {
  height: 23px;
  padding: 4px 0 0 4px;
}
.bottom-right {
  flex: 1;
  min-width: 0;
  margin: 8px 0 0 8px;
  padding-top: 8px;
  border-top: 1px solid #c8ccd0;
  overflow: hidden;
}
.status-grid {
  width: 484px;
  border-top: 1px solid #a0a4ac;
}

/* desktop windows */
.window {
  position: absolute;
  border: 1px solid #303840;
  border-radius: 7px;
  box-shadow: inset 0 0 0 1px rgba(255, 255, 255, 0.7), 0 2px 14px rgba(0, 0, 0, 0.7);
}
.titlebar {
  display: flex;
  align-items: center;
  font-family: "Noto Sans", "Noto Sans CJK SC", sans-serif;
}
.title {
  flex: 1;
}
.title b {
  font-size: 13px;
  font-weight: 400;
}
.caption {
  align-self: flex-start;
  display: flex;
  border: 1px solid #7a8a9a;
  border-top: 0;
  border-radius: 0 0 5px 5px;
  overflow: hidden;
}
.cap {
  width: 27px;
  height: 18px;
  border: 0;
  border-right: 1px solid #8a9aaa;
  background: linear-gradient(rgba(255, 255, 255, 0.7), rgba(255, 255, 255, 0.2) 50%, rgba(130, 155, 185, 0.4) 50%, rgba(255, 255, 255, 0.4));
  display: flex;
  align-items: center;
  justify-content: center;
}
.cap i {
  border: 1px solid #505868;
  background: #fff;
}
.min {
  width: 12px;
  height: 5px;
  margin-top: 4px;
}
.max {
  width: 12px;
  height: 10px;
  box-shadow: inset 0 0 0 2px #fff, inset 0 0 0 3px #505868;
}
.cap-close {
  width: 45px;
  border-right: 0;
  color: #fff;
  font: 700 14px "Liberation Sans", sans-serif;
  text-shadow: 0 0 1px #000, 0 0 2px #000;
}
.cap-red {
  background: linear-gradient(#e8a898, #d07060 50%, #b83020 50%, #d06850);
}
.scroll {
  height: 17px;
  flex: none;
  margin-top: auto;
  display: flex;
  align-items: center;
  background: #f0f0f0;
}
.arrow-left {
  margin: 0 9px 0 5px;
  border: 4px solid transparent;
  border-right-color: #444;
  border-left: 0;
}
.thumb {
  height: 15px;
  width: 256px;
  flex: none;
  border: 1px solid #989898;
  border-radius: 2px;
  background: linear-gradient(#f4f4f4 50%, #d8d8d8 50%, #e0e0e0);
  font-size: 8px;
  line-height: 12px;
  text-align: center;
  color: #555;
}
.thumb-flow {
  width: 265px;
}
.query-win {
  left: 222px;
  top: 320px;
  width: 300px;
  bottom: 127px;
  padding: 20px 10px 10px;
  background: #e4f4fc;
}
.query-body {
  height: 100%;
  display: flex;
  flex-direction: column;
  border: 1px solid #000;
  background: #ababab;
  overflow: hidden;
}
.dgv th {
  border-right: 1px solid #d8dce0;
  border-bottom: 1px solid #a0a0a0;
  background: linear-gradient(#fff, #f0f2f5);
}
.dgv td {
  height: 20px;
  line-height: 16px;
  padding: 0 1px 0 2px;
  border: 1px solid #a0a0a0;
  background: #fff;
}
.dgv td.row-head {
  background: linear-gradient(90deg, #fff, #eff1f5);
  border-color: #d8dce0;
  padding-left: 6px;
}
.tri {
  display: inline-block;
  border: 5px solid transparent;
  border-left-color: #000;
  border-right: 0;
  vertical-align: middle;
}
.query-table th {
  height: 36px;
  line-height: 16px;
  padding: 2px 6px 0;
}
.query-table td {
  background: #3399ff;
  color: #fff;
}
.query-table td.row-head {
  background: #88d0f4;
}
.flow-win {
  left: -5px;
  top: 28px;
  width: 497px;
  height: 333px;
  padding: 0 7px 7px 7px;
  background: linear-gradient(#d4e8f8, #e8fcfe 30px, #dcf4fc);
  display: flex;
  flex-direction: column;
}
.flow-win .titlebar {
  height: 28px;
  flex: none;
}
.star {
  width: 14px;
  height: 14px;
  margin: 0 6px 0 2px;
}
.flow-body {
  flex: 1;
  position: relative;
  display: flex;
  flex-direction: column;
  border: 1px solid #000;
  background: #ababab;
  margin-left: 1px;
}
.flow-table th {
  height: 20px;
  padding: 0 6px;
}
.flow-table th.hot {
  background: linear-gradient(#e0f4fc 50%, #b8e4f8 50%);
}
.flow-table td.picked {
  background: #3399ff;
  color: #fff;
}
.highlight {
  position: absolute;
  left: 37px;
  top: 75px;
  width: 343px;
  height: 47px;
  border: 3px solid #e815e8;
  box-shadow: 1px 2px 4px rgba(0, 0, 0, 0.5), inset 1px 2px 4px rgba(0, 0, 0, 0.5);
}

/* editor */
.editor {
  left: 467px;
  right: 163px;
  top: 114px;
  bottom: 1px;
  padding: 0 6px 4px;
  background: linear-gradient(#c0dcf8, #b0d4f8 30px, #b8d8f8);
  display: flex;
  flex-direction: column;
}
.editor .titlebar {
  height: 28px;
  flex: none;
}
.xicon {
  width: 16px;
  height: 14px;
  margin-right: 5px;
}
.head {
  height: 58px;
  flex: none;
  display: flex;
  gap: 1px;
  border-top: 2px solid #4c7474;
  background: #fff;
}
.menu, .brand {
  background: #9cdbdb;
  border: 2px solid #d8f8f8;
}
.menu {
  flex: 1;
  display: flex;
  align-items: center;
  gap: 18px;
  padding: 0 12px 2px 13px;
  border-right-color: #4c7878;
  border-bottom-color: #4c7878;
  font: 700 14px "Liberation Serif", serif;
}
.menu u {
  text-underline-offset: 4px;
  text-decoration-thickness: 1px;
}
.help {
  margin-left: auto;
}
.brand {
  width: 414px;
  flex: none;
  display: flex;
  padding-left: 4px;
  border-top: 0;
  border-left-color: #4c7878;
}
.logo {
  display: flex;
  align-items: center;
  width: 164px;
  flex: none;
  color: #000080;
  font: italic 700 32px "Liberation Sans", sans-serif;
}
.flames {
  width: 20px;
  height: 24px;
  flex: none;
}
.o {
  width: 22px;
  height: 22px;
  flex: none;
  margin-top: 5px;
}
.product {
  width: 138px;
  flex: none;
  font-family: "Liberation Serif", serif;
  text-align: center;
}
.product strong {
  display: block;
  font-size: 24px;
  line-height: 32px;
  white-space: nowrap;
}
.product em {
  display: block;
  font-weight: 700;
  font-size: 14px;
  line-height: 18px;
}
.clock {
  flex: 1;
  padding-top: 4px;
  text-align: center;
  white-space: nowrap;
  font: italic 700 15px/16px "Liberation Mono", monospace;
}
.work {
  flex: 1;
  min-height: 0;
  display: flex;
  background: #000;
}
.layers {
  width: 156px;
  flex: none;
  display: flex;
  flex-direction: column;
  background: #54ceae;
  padding: 3px 3px 2px;
  margin-right: 1px;
  border-right: 1px solid #b0f0e0;
  font-family: "Liberation Mono", monospace;
}
.field {
  height: 19px;
  flex: none;
  border: 1px solid #000;
  background: #9cdbdb;
  font-size: 15px;
  line-height: 18px;
  font-weight: 700;
  padding-left: 2px;
  white-space: nowrap;
}
.matrix-wrap {
  margin-top: 2px;
  padding: 2px;
  border: 1px solid #000;
}
.matrix {
  width: 100%;
  height: 22px;
  display: block;
  text-align: left;
  padding-left: 2px;
  background: #9cdbdb;
  border: 2px solid;
  border-color: #d8f8f8 #4c7878 #4c7878 #d8f8f8;
  font-size: 15px;
  line-height: 16px;
  font-weight: 700;
}
.layer-area {
  flex: 1;
  margin: 1px -2px 2px -3px;
  border-top: 3px solid #2e6a5c;
  border-left: 3px solid #2e6a5c;
  border-bottom: 1px solid #b0f0e0;
}
.layer-frame {
  width: 122px;
  margin-left: 1px;
  border: 1px solid #000;
  box-shadow: 1px 1px #b0f0e0;
  padding: 2px 2px 10px;
  display: flex;
  flex-direction: column;
  gap: 3px;
}
.layer-group {
  background: #000;
  padding: 1px 1px 1px 2px;
}
.layer {
  display: flex;
  height: 16px;
  align-items: center;
}
.layer input {
  appearance: none;
  width: 14px;
  height: 14px;
  flex: none;
  background: #fff;
  border: 2px solid #fff;
  box-shadow: inset 0 0 0 2px #000;
}
.layer i {
  width: 14px;
  height: 14px;
  flex: none;
  margin: 0 2px;
}
.layer .c-blue { background: #0019ff; }
.layer .c-green { background: #469a00; }
.layer span {
  flex: 1;
  min-width: 0;
  height: 14px;
  padding-left: 1px;
  font-size: 12px;
  line-height: 14px;
  font-weight: 700;
  white-space: nowrap;
}
.layer small {
  float: right;
  font-size: 10px;
}
.work-layer input {
  background: #fff;
  border-color: #0000a0;
}
.aqua span { background: #9cdbdb; }
.white span { background: #fff; }
.green span { background: #00a47c; }
.gold span { background: #fdc54c; }
.slate span { background: #98b4bc; }
.grey span { background: #dcdcdc; }
.field.selected {
  background: #fdc54c;
  font-size: 12px;
}
.canvas {
  flex: 1;
  min-width: 0;
  position: relative;
  overflow: hidden;
}
.pcb {
  width: 662px;
  height: 597px;
  display: block;
}
.pcb use, .copper, .halo {
  stroke-linecap: round;
}
.halo {
  stroke: #000;
  fill: none;
}
.cut {
  stroke: #000;
  stroke-width: 12;
  fill: none;
}
.copper {
  stroke: #001bff;
  fill: none;
}
.pcb .sq {
  stroke-linecap: square;
}
.thin {
  stroke: #1432cc;
  stroke-width: 5;
}
.pad {
  fill: #46b4ff;
  stroke: #3c8c3c;
  stroke-width: 2;
}
.mask {
  fill: none;
  stroke: #469a00;
}
.mask .solid {
  fill: #469a00;
}
.mask text {
  fill: #469a00;
  stroke: none;
  font-family: "Liberation Sans", sans-serif;
}
.mask .ul {
  font-weight: 700;
  font-style: italic;
}
.mask .small {
  font-weight: 700;
}
.pointer {
  position: absolute;
  left: 337px;
  top: 200px;
  width: 166px;
  height: 54px;
}
.tools {
  width: 163px;
  flex: none;
  display: flex;
  flex-direction: column;
  background: #9cdbdb;
  border-left: 1px solid #2e6a5c;
  border-right: 2px solid #b0f0e0;
}
.tool-grid {
  display: grid;
  grid-template-columns: repeat(4, 38px);
  gap: 2px;
  background: #000;
  padding: 2px 0 2px 1px;
}
.view-tools {
  border-top: 1px solid #2e6a5c;
  margin-bottom: 2px;
}
.edit-tools {
  border-top: 1px solid #808080;
  border-bottom: 2px solid #808080;
}
.tool {
  height: 38px;
  display: flex;
  align-items: center;
  justify-content: center;
  background: #9cdbdb;
  border: 3px solid;
  border-color: #d0f4f4 #5c9090 #5c9090 #d0f4f4;
}
.tool svg {
  width: 30px;
  height: 30px;
  flex: none;
  border: 1px solid #000;
}
.tool text {
  font-family: "Liberation Mono", monospace;
  font-weight: 700;
}
.edit-tools .tool {
  background: #cfcfcf;
  border-color: #f4f4f4 #7c7c7c #7c7c7c #f4f4f4;
}
.edit-tools .lit {
  background: #fff;
  border-right-color: #d8d8d8;
  border-bottom-color: #d8d8d8;
}
.edit-tools .amber {
  background: #fdc54c;
  border-color: #fde8b0 #9c7420 #9c7420 #fde8b0;
}
.view-tools .alert {
  border-color: #a82020;
}
.k3, .k6 {
  fill: none;
  stroke: #000;
  stroke-width: 3;
}
.k6 {
  stroke-width: 6;
}
.minimap {
  flex: 1;
  width: 100%;
  min-height: 0;
  background: #000;
}
.coords {
  height: 44px;
  flex: none;
  background: #54ceae;
  border-top: 2px solid #2e6a5c;
  border-bottom: 2px solid #b0f0e0;
  padding: 6px 0 0 3px;
  font: 700 15px/16px "Liberation Mono", monospace;
  white-space: nowrap;
}
.prompt {
  height: 34px;
  flex: none;
  display: flex;
  gap: 1px;
  padding: 1px 0 1px 1px;
  background: #000;
  font: 700 12px "Liberation Mono", monospace;
}
.prompt > * {
  background: #ffffce;
}
.mini {
  width: 32px;
  border: 3px ridge #d8d8a0;
  display: flex;
  align-items: center;
  justify-content: center;
}
.mini svg {
  width: 20px;
  height: 20px;
  flex: none;
}
.teal {
  width: 28px;
  outline: 2px solid #54ceae;
  outline-offset: -2px;
  border: 4px outset #d0d0b0;
}
.xy {
  width: 48px;
  padding: 10px 0 0 3px;
  white-space: nowrap;
}
.xy-input {
  width: 171px;
  border: 3px inset #c8c8a0;
  outline: 1px solid #ffffce;
  padding-left: 4px;
}
.message {
  flex: 1;
  padding: 10px 0 0 4px;
}
.prompt .unit-wrap {
  width: 79px;
  background: #54ceae;
  padding: 2px 4px 2px 6px;
}
.unit {
  width: 100%;
  height: 28px;
  display: flex;
  align-items: center;
  justify-content: space-between;
  padding: 0 5px 0 4px;
  background: #54ceae;
  border: 2px solid;
  border-color: #a0ecd8 #2e6a5c #2e6a5c #a0ecd8;
}
.unit i {
  width: 12px;
  height: 8px;
  border: 2px solid;
  border-color: #a0ecd8 #2e6a5c #2e6a5c #a0ecd8;
}
.status {
  height: 34px;
  flex: none;
  background: #5c9c9c;
  border-top: 2px solid #5c9c9c;
  padding: 2px;
}
.status div {
  height: 28px;
  border: 3px ridge #c8ffff;
  outline: 1px solid #000;
  background: #b4ffff;
  text-align: center;
  font: 700 12px/22px "Liberation Mono", monospace;
}
```
